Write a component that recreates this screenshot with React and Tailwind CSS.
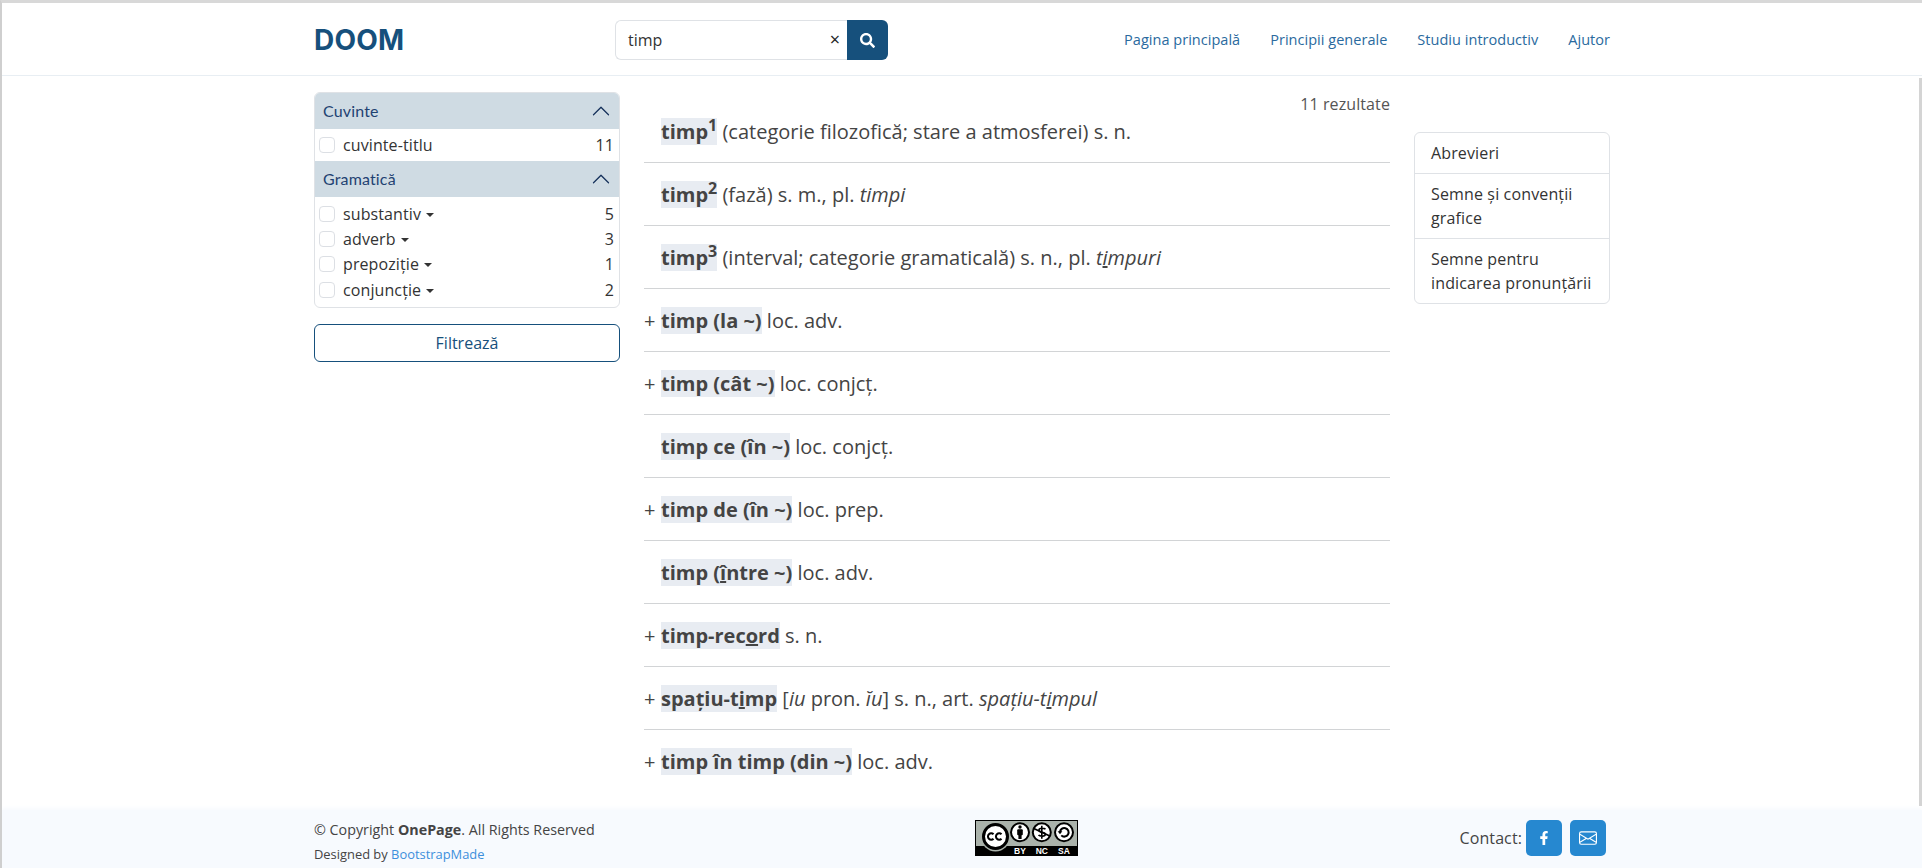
import React from 'react';
import { FaSearch, FaFacebookF } from 'react-icons/fa';
import { BsEnvelope } from 'react-icons/bs';

const openSans = { fontFamily: '"Open Sans", sans-serif' };

function Chevron() {
  return (
    <svg width="20" height="20" viewBox="0 0 16 16" fill="#16325c" className="rotate-180">
      <path fillRule="evenodd" d="M1.646 4.646a.5.5 0 0 1 .708 0L8 10.293l5.646-5.647a.5.5 0 0 1 .708.708l-6 6a.5.5 0 0 1-.708 0l-6-6a.5.5 0 0 1 0-.708z" />
    </svg>
  );
}

function FacetHead({ title }) {
  return (
    <div className="flex items-center justify-between h-[36px] pl-[8px] pr-[8px] bg-[#cfdbe3] text-[#1f4272] text-[16px] tracking-[0.15px] font-['Lato',sans-serif]">
      <span>{title}</span>
      <Chevron />
    </div>
  );
}

function FacetRow({ label, count, caret, className }) {
  return (
    <div className={'flex items-center pl-[4px] pr-[5px] text-[16px] tracking-[0.1px] text-[#333] ' + className}>
      <span className="w-[16px] h-[16px] rounded-[4px] border border-[#dcdfe4] bg-white mr-[8px]" />
      <span>{label}</span>
      {caret && <span className="ml-[5px] mt-[2px] w-0 h-0 border-x-[4px] border-x-transparent border-t-[4px] border-t-[#333]" />}
      <span className="ml-auto">{count}</span>
    </div>
  );
}

function Sidebar() {
  return (
    <aside className="w-[306px] shrink-0">
      <div className="rounded-[6px] border border-[#dfe2e6] overflow-hidden">
        <FacetHead title="Cuvinte" />
        <FacetRow label="cuvinte-titlu" count="11" className="h-[32px]" />
        <FacetHead title="Gramatică" />
        <div className="pt-[4px] pb-[5px]">
          <FacetRow label="substantiv" count="5" caret className="h-[25px]" />
          <FacetRow label="adverb" count="3" caret className="h-[25px]" />
          <FacetRow label="prepoziție" count="1" caret className="h-[26px]" />
          <FacetRow label="conjuncție" count="2" caret className="h-[25px]" />
        </div>
      </div>
      <button className="mt-[16px] w-full h-[38px] rounded-[6px] border border-[#16507c] text-[#16507c] text-[16px] bg-white">
        Filtrează
      </button>
    </aside>
  );
}

function Hw({ children }) {
  return <span className="bg-[#e8ecf2] font-bold">{children}</span>;
}

function Sup({ children }) {
  return <sup className="text-[16px] font-bold leading-[0] align-baseline relative -top-[8px]">{children}</sup>;
}

function Row({ plus, last, children }) {
  return (
    <div className={'flex items-center h-[63px] pt-[1px] ' + (last ? '' : 'border-b-[1.5px] border-[#d2d4d6]')}>
      <span className="w-[17px] shrink-0">{plus ? '+' : ''}</span>
      <div>{children}</div>
    </div>
  );
}

function Results() {
  return (
    <main className="w-[746px] shrink-0 text-[20px] text-[#444]">
      <div className="text-right text-[16px] tracking-[0.1px] text-[#555] leading-[24px] -mb-[16px]">11 rezultate</div>
      <Row>
        <Hw>timp<Sup>1</Sup></Hw> (categorie filozofică; stare a atmosferei) s. n.
      </Row>
      <Row>
        <Hw>timp<Sup>2</Sup></Hw> (fază) s. m., pl. <i>timpi</i>
      </Row>
      <Row>
        <Hw>timp<Sup>3</Sup></Hw> (interval; categorie gramaticală) s. n., pl. <i>t<u>i</u>mpuri</i>
      </Row>
      <Row plus><Hw>timp (la ~)</Hw> loc. adv.</Row>
      <Row plus><Hw>timp (cât ~)</Hw> loc. conjcț.</Row>
      <Row><Hw>timp ce (în ~)</Hw> loc. conjcț.</Row>
      <Row plus><Hw>timp de (în ~)</Hw> loc. prep.</Row>
      <Row><Hw>timp (<u>î</u>ntre ~)</Hw> loc. adv.</Row>
      <Row plus><Hw>timp-rec<u>o</u>rd</Hw> s. n.</Row>
      <Row plus>
        <Hw>spațiu-t<u>i</u>mp</Hw> [<i>iu</i> pron. <i>ĭu</i>] s. n., art. <i>spațiu-t<u>i</u>mpul</i>
      </Row>
      <Row plus last><Hw>timp în timp (din ~)</Hw> loc. adv.</Row>
    </main>
  );
}

function SideLinks() {
  return (
    <div className="w-[196px] shrink-0 mt-[40px] self-start rounded-[6px] border border-[#dfe2e6] text-[16px] tracking-[0.14px] leading-[24px] text-[#333]">
      <div className="px-[16px] py-[8px] border-b border-[#dfe2e6]">Abrevieri</div>
      <div className="px-[16px] py-[8px] border-b border-[#dfe2e6]">Semne și convenții grafice</div>
      <div className="px-[16px] py-[8px]">Semne pentru indicarea pronunțării</div>
    </div>
  );
}

function CcBadge() {
  return (
    <svg width="103" height="36" viewBox="0 0 103 36" className="shrink-0">
      <rect width="103" height="36" fill="#aab2ab" />
      <rect x="0.5" y="0.5" width="102" height="35" fill="none" stroke="#000" />
      <rect y="26" width="103" height="10" fill="#000" />
      <circle cx="20.5" cy="17" r="14.5" fill="#aab2ab" />
      <circle cx="20.5" cy="16.5" r="12" fill="#fff" stroke="#000" strokeWidth="3" />
      <path d="M18.5 14.3a3.2 3.2 0 1 0 0 4.4M26.5 14.3a3.2 3.2 0 1 0 0 4.4" fill="none" stroke="#000" strokeWidth="2" />
      <circle cx="45" cy="12.3" r="9" fill="#fff" stroke="#000" strokeWidth="2" />
      <circle cx="45" cy="7" r="1.7" />
      <rect x="42.2" y="9.2" width="5.6" height="6" rx="1" />
      <rect x="43.4" y="14" width="3.2" height="5" />
      <circle cx="66.8" cy="12.3" r="9" fill="#fff" stroke="#000" strokeWidth="2" />
      <path d="M58.8 8.5l16 7.5" stroke="#000" strokeWidth="1.8" />
      <path d="M70.5 9.3c-1-1.3-6.6-1.8-6.6.9 0 2.8 6.4 1.4 6.4 4.1 0 2.6-5.6 2.2-6.8.8M66.8 5.8v13" fill="none" stroke="#000" strokeWidth="1.6" />
      <circle cx="89" cy="12.3" r="9" fill="#fff" stroke="#000" strokeWidth="2" />
      <path d="M85 12.3a4.3 4.3 0 1 1 1.3 3.1" fill="none" stroke="#000" strokeWidth="2" />
      <path d="M82.6 11.2h4.8l-2.4 3z" />
      <text x="45" y="34.3" textAnchor="middle" fill="#fff" fontSize="8.5" fontWeight="700" fontFamily="Liberation Sans, sans-serif">BY</text>
      <text x="66.8" y="34.3" textAnchor="middle" fill="#fff" fontSize="8.5" fontWeight="700" fontFamily="Liberation Sans, sans-serif">NC</text>
      <text x="89" y="34.3" textAnchor="middle" fill="#fff" fontSize="8.5" fontWeight="700" fontFamily="Liberation Sans, sans-serif">SA</text>
    </svg>
  );
}

function Header() {
  return (
    <header className="h-[73px] shrink-0 border-b border-[#e8eef3] flex justify-center">
      <div className="w-[1296px] flex items-center pt-[2px]">
        <div className="w-[301px] text-[#16507c] text-[28px] font-bold font-['Inter',sans-serif] tracking-[0.2px]">DOOM</div>
        <div className="flex h-[40px] w-[273px]">
          <div className="flex-1 flex items-center justify-between pl-[12px] pr-[7px] border border-r-0 border-[#dfe2e6] rounded-l-[6px] text-[16px] text-[#333]">
            <span>timp</span>
            <span className="text-[#222] text-[18px] leading-none -mt-[2px]">×</span>
          </div>
          <div className="w-[41px] bg-[#16507c] rounded-r-[6px] flex items-center justify-center text-white">
            <FaSearch size={15} />
          </div>
        </div>
        <nav className="ml-auto flex gap-[30px] text-[14.5px] tracking-[0.03px] text-[#2a6a9e]">
          <a>Pagina principală</a>
          <a>Principii generale</a>
          <a>Studiu introductiv</a>
          <a>Ajutor</a>
        </nav>
      </div>
    </header>
  );
}

function Footer() {
  return (
    <footer className="h-[58px] shrink-0 bg-[#f7fafe] shadow-[0_-2px_4px_#f7fafe] flex justify-center">
      <div className="w-[1296px] flex items-start pt-[10px]">
        <div className="w-[661px] shrink-0 text-[#444]">
          <div className="text-[14.3px] leading-[20px]">© Copyright <b>OnePage</b>. All Rights Reserved</div>
          <div className="text-[12.9px] leading-[20px] mt-[4px]">
            Designed by <span className="text-[#3d8fdc]">BootstrapMade</span>
          </div>
        </div>
        <CcBadge />
        <div className="flex-1 flex justify-end items-center gap-[8px] mr-[4px] text-[16px] tracking-[0.1px] text-[#444]">
          <span className="-mr-[4px]">Contact:</span>
          <span className="w-[36px] h-[36px] rounded-[5px] bg-[#2688d0] flex items-center justify-center text-white">
            <FaFacebookF size={14} />
          </span>
          <span className="w-[36px] h-[36px] rounded-[5px] bg-[#2688d0] flex items-center justify-center text-white">
            <BsEnvelope size={18} />
          </span>
        </div>
      </div>
    </footer>
  );
}

export default function App() {
  return (
    <div
      className="relative h-[868px] overflow-hidden bg-white border-l-2 border-t-[3px] border-l-[#cfcfcf] border-t-[#d8d8d8] flex flex-col"
      style={openSans}
    >
      <Header />
      <div className="flex-1 flex justify-center pt-[16px]">
        <div className="w-[1296px] flex items-start gap-[24px]">
          <Sidebar />
          <Results />
          <SideLinks />
        </div>
      </div>
      <Footer />
      {/* scrollbar thumb */}
      <div className="absolute right-0 top-[75px] w-[3px] h-[728px] bg-[#d4d4d4]" />
    </div>
  );
}
